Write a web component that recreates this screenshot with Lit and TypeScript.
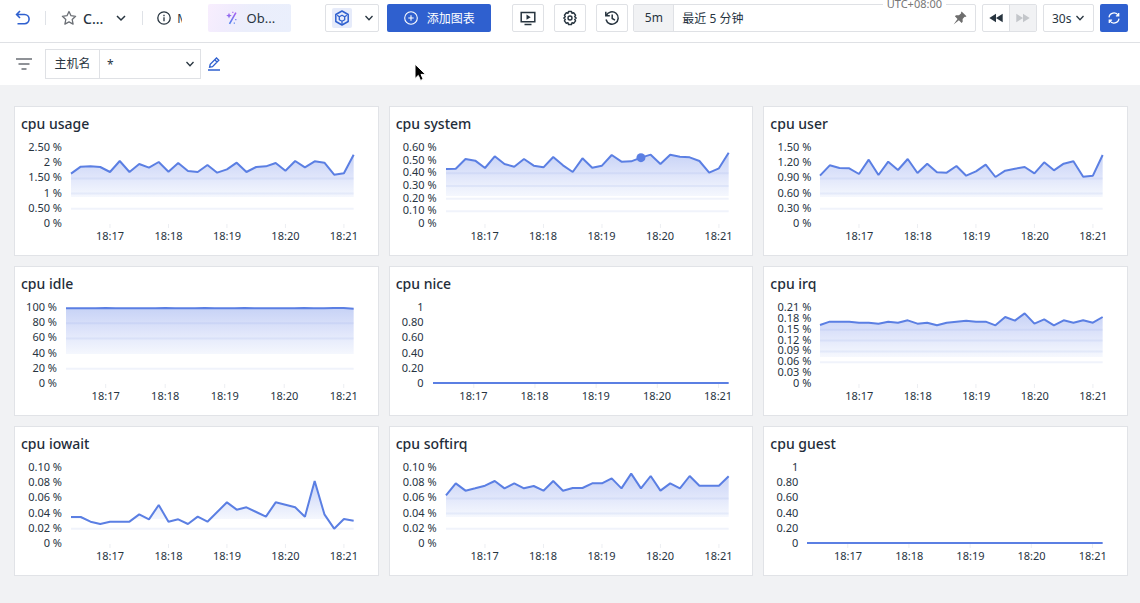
import { LitElement, html, svg, css } from "lit";
import { customElement, property } from "lit/decorators.js";

interface Chart {
  title: string;
  axis: "narrow" | "mid" | "wide";
  labels: string[];
  /** indexes of the rules drawn, counted up from zero */
  rules: number[];
  /** sample heights on a 0..228 scale */
  points: number[];
  marker?: number;
}

const SCALE = 228;
const STEPS = 29;
const TIMES = ["18:17", "18:18", "18:19", "18:20", "18:21"];
const TICKS = [4, 10, 16, 22, 28];
const flat = (value: number) => new Array(STEPS + 1).fill(value);

const CHARTS: Chart[] = [
  {
    title: "cpu usage", axis: "wide", rules: [1, 2, 3],
    labels: ["2.50 %", "2 %", "1.50 %", "1 %", "0.50 %", "0 %"],
    points: [148, 169, 170, 168, 153, 186, 153, 177, 166, 183, 154, 180, 156, 153, 174, 151, 161, 181, 153, 168, 170, 180, 157, 186, 167, 185, 181, 145, 149, 205],
  },
  {
    title: "cpu system", axis: "wide", rules: [1, 2, 3, 4], marker: 20,
    labels: ["0.60 %", "0.50 %", "0.40 %", "0.30 %", "0.20 %", "0.10 %", "0 %"],
    points: [162, 163, 192, 187, 165, 200, 177, 169, 192, 172, 167, 198, 173, 153, 194, 166, 172, 204, 184, 185, 196, 205, 177, 205, 199, 197, 186, 151, 164, 211],
  },
  {
    title: "cpu user", axis: "wide", rules: [1, 2, 3],
    labels: ["1.50 %", "1.20 %", "0.90 %", "0.60 %", "0.30 %", "0 %"],
    points: [142, 173, 165, 164, 147, 190, 144, 184, 159, 192, 150, 178, 152, 151, 171, 142, 155, 175, 138, 157, 163, 168, 149, 182, 158, 178, 185, 139, 142, 204],
  },
  {
    title: "cpu idle", axis: "mid", rules: [1, 3, 4],
    labels: ["100 %", "80 %", "60 %", "40 %", "20 %", "0 %"],
    points: [224, 224, 224, 224, 225, 224, 224, 224, 224, 224, 225, 224, 224, 224, 225, 224, 224, 224, 225, 224, 224, 224, 224, 224, 225, 224, 224, 225, 225, 223],
  },
  {
    title: "cpu nice", axis: "narrow", rules: [],
    labels: ["1", "0.80", "0.60", "0.40", "0.20", "0"],
    points: flat(0),
  },
  {
    title: "cpu irq", axis: "wide", rules: [2, 3, 4, 5],
    labels: ["0.21 %", "0.18 %", "0.15 %", "0.12 %", "0.09 %", "0.06 %", "0.03 %", "0 %"],
    points: [174, 184, 184, 184, 181, 181, 178, 184, 181, 188, 178, 181, 173, 181, 184, 187, 184, 184, 173, 198, 187, 209, 178, 191, 173, 188, 181, 188, 181, 198],
  },
  {
    title: "cpu iowait", axis: "wide", rules: [1],
    labels: ["0.10 %", "0.08 %", "0.06 %", "0.04 %", "0.02 %", "0 %"],
    points: [78, 78, 64, 57, 64, 64, 64, 86, 71, 114, 64, 71, 57, 79, 64, 93, 122, 100, 107, 93, 79, 122, 115, 107, 79, 186, 86, 43, 72, 67],
  },
  {
    title: "cpu softirq", axis: "wide", rules: [1, 2, 3],
    labels: ["0.10 %", "0.08 %", "0.06 %", "0.04 %", "0.02 %", "0 %"],
    points: [143, 179, 157, 164, 172, 186, 164, 179, 164, 171, 157, 186, 157, 165, 165, 179, 179, 194, 164, 208, 164, 201, 157, 179, 164, 201, 172, 172, 172, 200],
  },
  {
    title: "cpu guest", axis: "narrow", rules: [],
    labels: ["1", "0.80", "0.60", "0.40", "0.20", "0"],
    points: flat(0),
  },
];

@customElement("metric-card")
class MetricCard extends LitElement {
  @property({ attribute: false }) chart!: Chart;

  static styles = css`
    :host {
      display: block;
      min-width: 0;
      box-sizing: border-box;
      background: #fff;
      border: 1px solid #e1e3e7;
      padding: 7px 24px 14px 6px;
    }
    .title {
      margin: 0 0 8px;
      font-size: 14px;
      line-height: 20px;
      font-weight: 500;
      color: #1f2d3a;
    }
    .chart {
      display: grid;
      column-gap: 9px;
      color: #27343f;
      font-size: 11px;
      line-height: 10px;
    }
    .wide { grid-template-columns: 41px minmax(0, 1fr); }
    .mid { grid-template-columns: 36px minmax(0, 1fr); }
    .narrow { grid-template-columns: 28px minmax(0, 1fr); }
    .values {
      display: flex;
      flex-direction: column;
      justify-content: space-between;
      height: 86px;
      text-align: right;
      white-space: nowrap;
    }
    .plot {
      display: block;
      width: 100%;
      height: 76px;
      margin-top: 5px;
      overflow: visible;
    }
    .times {
      grid-column: 2;
      display: grid;
      grid-template-columns: 1fr repeat(5, 6fr);
      width: calc(100% * 31 / 29);
      padding-top: 3px;
      text-align: center;
    }
    .times span:first-child { grid-column-start: 2; }
    .rule, .tick, .line, .marker { fill: none; vector-effect: non-scaling-stroke; }
    .rule { stroke: #f0f3fb; stroke-width: 2; }
    .tick { stroke: #eceef2; stroke-width: 1; }
    .line { stroke: #5b7fe3; stroke-width: 2; stroke-linejoin: bevel; }
    .marker { stroke: #5b7fe3; stroke-width: 9; stroke-linecap: round; }
  `;

  render() {
    const { title, axis, labels, rules, points, marker } = this.chart;
    const at = (i: number) => `${i * 10},${SCALE - points[i]}`;
    const path = points.map((_, i) => at(i)).join(" L");
    const right = STEPS * 10;
    return html`
      <h2 class="title">${title}</h2>
      <div class="chart ${axis}">
        <div class="values">${labels.map((l) => html`<span>${l}</span>`)}</div>
        <svg class="plot" viewBox="0 0 ${right} ${SCALE}" preserveAspectRatio="none" role="img" aria-label=${title}>
          <defs>
            <linearGradient id="fade" x1="0" y1="0" x2="0" y2="1">
              <stop offset="0" stop-color="#4a6fe0" stop-opacity=".31" />
              <stop offset=".3" stop-color="#5070e6" stop-opacity=".19" />
              <stop offset=".62" stop-color="#5b82e8" stop-opacity=".06" />
              <stop offset=".62" stop-color="#5b82e8" stop-opacity="0" />
            </linearGradient>
          </defs>
          ${rules.map((r) => {
            const y = SCALE + 3 - (SCALE * r) / (labels.length - 1);
            return svg`<path class="rule" d="M0,${y} H${right}" />`;
          })}
          ${TICKS.map((t) => svg`<path class="tick" d="M${t * 10},${SCALE + 3} v12" />`)}
          <path fill="url(#fade)" d="M0,${SCALE} L${path} L${right},${SCALE} Z" />
          <path class="line" d="M${path}" />
          ${marker === undefined ? null : svg`<path class="marker" d="M${at(marker)} h0.01" />`}
        </svg>
        <div class="times">${TIMES.map((t) => html`<span>${t}</span>`)}</div>
      </div>
    `;
  }
}

const chevron = html`<svg class="chevron" width="10" height="10" viewBox="0 0 10 10"><path d="M1.500 3 5 6.700 8.500 3" fill="none" stroke="currentColor" stroke-width="1.300" /></svg>`;

@customElement("app-root")
class AppRoot extends LitElement {
  static styles = css`
    :host {
      display: block;
      position: relative;
      min-height: 100vh;
      background: #f1f2f4;
      color: #27343f;
      font-family: "Noto Sans", "Noto Sans CJK SC", sans-serif;
      font-size: 12px;
    }
    * { box-sizing: border-box; }
    svg { display: block; flex: none; }
    button, input, select {
      font: inherit;
      color: inherit;
      margin: 0;
      padding: 0;
      border: 0;
      border-radius: 0;
      background: none;
      outline: none;
    }
    button { display: flex; align-items: center; justify-content: center; flex: none; }
    select { appearance: none; }
    .toolbar {
      display: flex;
      align-items: center;
      padding: 4px 12px 10px 14px;
      background: #fff;
      border-bottom: 1px solid #dfe1e5;
    }
    .crumbs, .actions { display: flex; align-items: center; height: 28px; flex: none; }
    .divider { width: 1px; height: 14px; background: #dfe2e7; margin: 0 15px; }
    .name { gap: 6px; font-size: 14px; font-weight: 500; }
    .name .chevron { margin-left: 6px; }
    .info { gap: 6px; margin-left: -1px; }
    .clip { width: 5px; overflow: hidden; text-align: left; }
    .assistant {
      width: 83px;
      height: 28px;
      margin-left: 26px;
      gap: 8px;
      font-size: 13px;
      border-radius: 2px;
      background: linear-gradient(110deg, #f8eefe 0%, #f1ecfd 25%, #ebeefb 50%, #eaeffc 100%);
    }
    .actions { flex: 1; margin-left: 34px; }
    .box { height: 28px; border: 1px solid #dfe1e5; border-radius: 2px; background: #fff; }
    .view { width: 54px; gap: 12px; padding-left: 2px; }
    .badge { display: flex; padding: 2px; background: #e6ebfa; border-radius: 2px; }
    .primary { height: 28px; border-radius: 2px; background: #2f60cf; color: #fff; }
    .add { width: 104px; gap: 9px; margin: 0 21px 0 8px; }
    .icon { width: 32px; margin-right: 10px; }
    .range { position: relative; display: flex; flex: 1; min-width: 180px; margin-left: -5px; align-items: center; padding-right: 8px; }
    .span { width: 40px; line-height: 26px; text-align: center; background: #f1f2f4; border-right: 1px solid #dfe1e5; }
    .range input { flex: 1; min-width: 0; padding-left: 8px; }
    .zone {
      position: absolute;
      top: -9px;
      right: 29px;
      padding: 0 4px;
      line-height: 16px;
      font-size: 11px;
      color: #777;
      background: #fff;
    }
    .pager { display: flex; width: 55px; margin: 0 6px; }
    .pager button { flex: 1; }
    .pager button:disabled { background: #f1f2f4; color: #c3c6ca; border-left: 1px solid #dfe1e5; }
    .picker { display: flex; align-items: center; position: relative; }
    .picker select { width: 100%; height: 100%; padding-left: 8px; }
    .picker .chevron { position: absolute; right: 8px; pointer-events: none; }
    .interval { width: 51px; margin-right: 6px; }
    .refresh { width: 28px; }
    .filters {
      display: flex;
      align-items: center;
      padding: 6px 16px;
      background: #fff;
    }
    .field { display: flex; height: 30px; margin: 0 7px 0 13px; border: 1px solid #dfe1e5; }
    .field label { width: 54px; line-height: 28px; text-align: center; border-right: 1px solid #dfe1e5; }
    .field .picker { width: 100px; }
    .field .picker .chevron { right: 5px; }
    .field select { padding-left: 7px; }
    .board {
      display: grid;
      grid-template-columns: repeat(3, minmax(0, 1fr));
      gap: 10px;
      padding: 21px 12px 24px 14px;
    }
    .pointer { position: absolute; left: 413px; top: 63px; pointer-events: none; }
  `;

  render() {
    return html`
      <header class="toolbar">
        <nav class="crumbs">
          <button aria-label="Back">
            <svg width="16" height="18" viewBox="0 0 16 18" fill="none" stroke="#2f60cf" stroke-width="1.600"><path d="M3 5.500h7.500a4.600 4.600 0 0 1 0 9.200H3.500M6 2 2.600 5.500 6 9" /></svg>
          </button>
          <span class="divider"></span>
          <button class="name">
            <svg width="16" height="16" viewBox="0 0 16 16" fill="none" stroke="#6b6f75" stroke-width="1.300" stroke-linejoin="round"><path d="m8 1.500 2 4.200 4.600.6-3.400 3.200.9 4.600L8 11.900l-4.100 2.200.9-4.600L1.400 6.300 6 5.700z" /></svg>
            <span>C...</span>
            <svg class="chevron" width="12" height="12" viewBox="0 0 12 12"><path d="m2 4 4 4 4-4" fill="none" stroke="currentColor" stroke-width="1.500" /></svg>
          </button>
          <span class="divider"></span>
          <button class="info">
            <svg width="14" height="14" viewBox="0 0 14 14" fill="none" stroke="#27343f" stroke-width="1.300"><circle cx="7" cy="7" r="6.200" /><path d="M7 6.200v4M7 3.800v1.400" /></svg>
            <span class="clip">M</span>
          </button>
        </nav>
        <button class="assistant">
          <svg width="14" height="14" viewBox="0 0 14 14">
            <defs><linearGradient id="wand" x1="0" y1="0" x2="0" y2="1"><stop offset="0" stop-color="#b15cf0" /><stop offset="1" stop-color="#4d86ee" /></linearGradient></defs>
            <path d="M10.200 1.200 11.600 2 5.200 13.200 3.800 12.400zM4 1.800l.8 2 2 .8-2 .8-.8 2-.8-2-2-.8 2-.8zM7.300.8h1.100v1.100H7.300zM10.200 8h1.200v1.200h-1.200zM8.700 11.500h1.200v1.200H8.700z" fill="url(#wand)" />
          </svg>
          <span>Ob...</span>
        </button>
        <div class="actions">
          <button class="box view" aria-label="View">
            <span class="badge"><svg width="16" height="16" viewBox="0 0 16 16" fill="none" stroke="#2f60cf" stroke-width="1.500" stroke-linejoin="round"><path d="M8 1 14.200 4.500v7L8 15l-6.200-3.500v-7z" /><path d="M8 5.200l2.700 1.500v3L8 11.200 5.300 9.700v-3zM3.200 5.200l2.100 1.500M12.800 5.200l-2.100 1.500M8 11.200V14" stroke-width="1.300" /></svg></span>
            ${chevron}
          </button>
          <button class="primary add">
            <svg width="14" height="14" viewBox="0 0 14 14" fill="none" stroke="#fff" stroke-width="1.100"><circle cx="7" cy="7" r="6.300" /><path d="M7 4.300v5.400M4.300 7h5.400" /></svg>
            <span>添加图表</span>
          </button>
          <button class="box icon" aria-label="Present">
            <svg width="16" height="16" viewBox="0 0 16 16" fill="none" stroke="#27343f" stroke-width="1.500"><path d="M1.200 2.500h13.600v9.300H1.200zM4.500 14.600h7" /><path d="m6.500 4.600 4.200 2.600-4.200 2.600z" fill="#27343f" stroke="none" /></svg>
          </button>
          <button class="box icon" aria-label="Settings">
            <svg width="16" height="16" viewBox="0 0 16 16" fill="none" stroke="#27343f" stroke-width="1.400" stroke-linejoin="round"><path d="M6.500 1.500h3l.5 1.700 1.700-.4 1.900 2.400-.9 1.500 1.500 1.300-1.500 1.400.9 1.500-1.900 2.300-1.700-.4-.5 1.700h-3L6 12.800l-1.700.4-1.900-2.300.9-1.500L1.800 8l1.500-1.300-.9-1.500 1.900-2.400 1.700.4z" /><circle cx="8" cy="8" r="2" /></svg>
          </button>
          <button class="box icon" aria-label="History">
            <svg width="16" height="16" viewBox="0 0 16 16" fill="none" stroke="#27343f" stroke-width="1.500"><path d="M2.300 5.500a6.200 6.200 0 1 1-.3 4M1.800 1.800v4h4M8.200 4.500V8.500l2.800 1.600" /></svg>
          </button>
          <div class="box range">
            <span class="span">5m</span>
            <input aria-label="Time range" value="最近 5 分钟" />
            <span class="zone">UTC+08:00</span>
            <svg width="14" height="14" viewBox="0 0 14 14" fill="#6e6e6e"><path d="m8.600.6 4.900 4.700-1.300.6-.6-.2-2 2.200.1 2.900-1.100 1.100-2.700-2.600L.6 13.400l3.900-5.500L1.900 5.300 3 4.200l3 .1 2.200-2-.2-.6z" /></svg>
          </div>
          <div class="box pager">
            <button aria-label="Earlier"><svg width="14" height="10" viewBox="0 0 14 10" fill="currentColor"><path d="M7 .7v8.600L.3 5zM13.700.7v8.600L7 5z" /></svg></button>
            <button aria-label="Later" disabled><svg width="14" height="10" viewBox="0 0 14 10" fill="currentColor"><path d="M.3.7v8.600L7 5zM7 .7v8.600L13.700 5z" /></svg></button>
          </div>
          <div class="box picker interval">
            <select aria-label="Refresh interval"><option>30s</option></select>
            ${chevron}
          </div>
          <button class="primary refresh" aria-label="Refresh">
            <svg width="14" height="14" viewBox="0 0 14 14" fill="none" stroke="#fff" stroke-width="1.300"><path d="M2 6.300A5 5 0 0 1 11.300 4.500M12 7.700A5 5 0 0 1 2.700 9.500M11.700 1.900v3H8.900M2.300 12.100v-3h2.800" /></svg>
          </button>
        </div>
      </header>
      <section class="filters">
        <svg width="16" height="14" viewBox="0 0 16 14" stroke="#6b6f75" stroke-width="1.500"><path d="M0 2h16M2.500 7h11M5.500 12h5" /></svg>
        <div class="field">
          <label for="host">主机名</label>
          <div class="picker">
            <select id="host"><option>*</option></select>
            ${chevron}
          </div>
        </div>
        <button aria-label="Edit filters">
          <svg width="12" height="14" viewBox="0 0 12 14" fill="none" stroke="#2f60cf" stroke-width="1.300"><path d="M0 13h12M1.600 10.200l.6-2.900L8.500 1l2.300 2.200-6.300 6.400zM6.800 2.800 9 5" /></svg>
        </button>
      </section>
      <main class="board">
        ${CHARTS.map((c) => html`<metric-card .chart=${c}></metric-card>`)}
      </main>
      <svg class="pointer" width="14" height="19" viewBox="0 0 14 19"><path d="M2 1.200v14.400l3.300-3.200 2.200 5 2.700-1.100-2.200-4.900h4.600z" fill="#000" stroke="#fff" stroke-width="1" /></svg>
    `;
  }
}
